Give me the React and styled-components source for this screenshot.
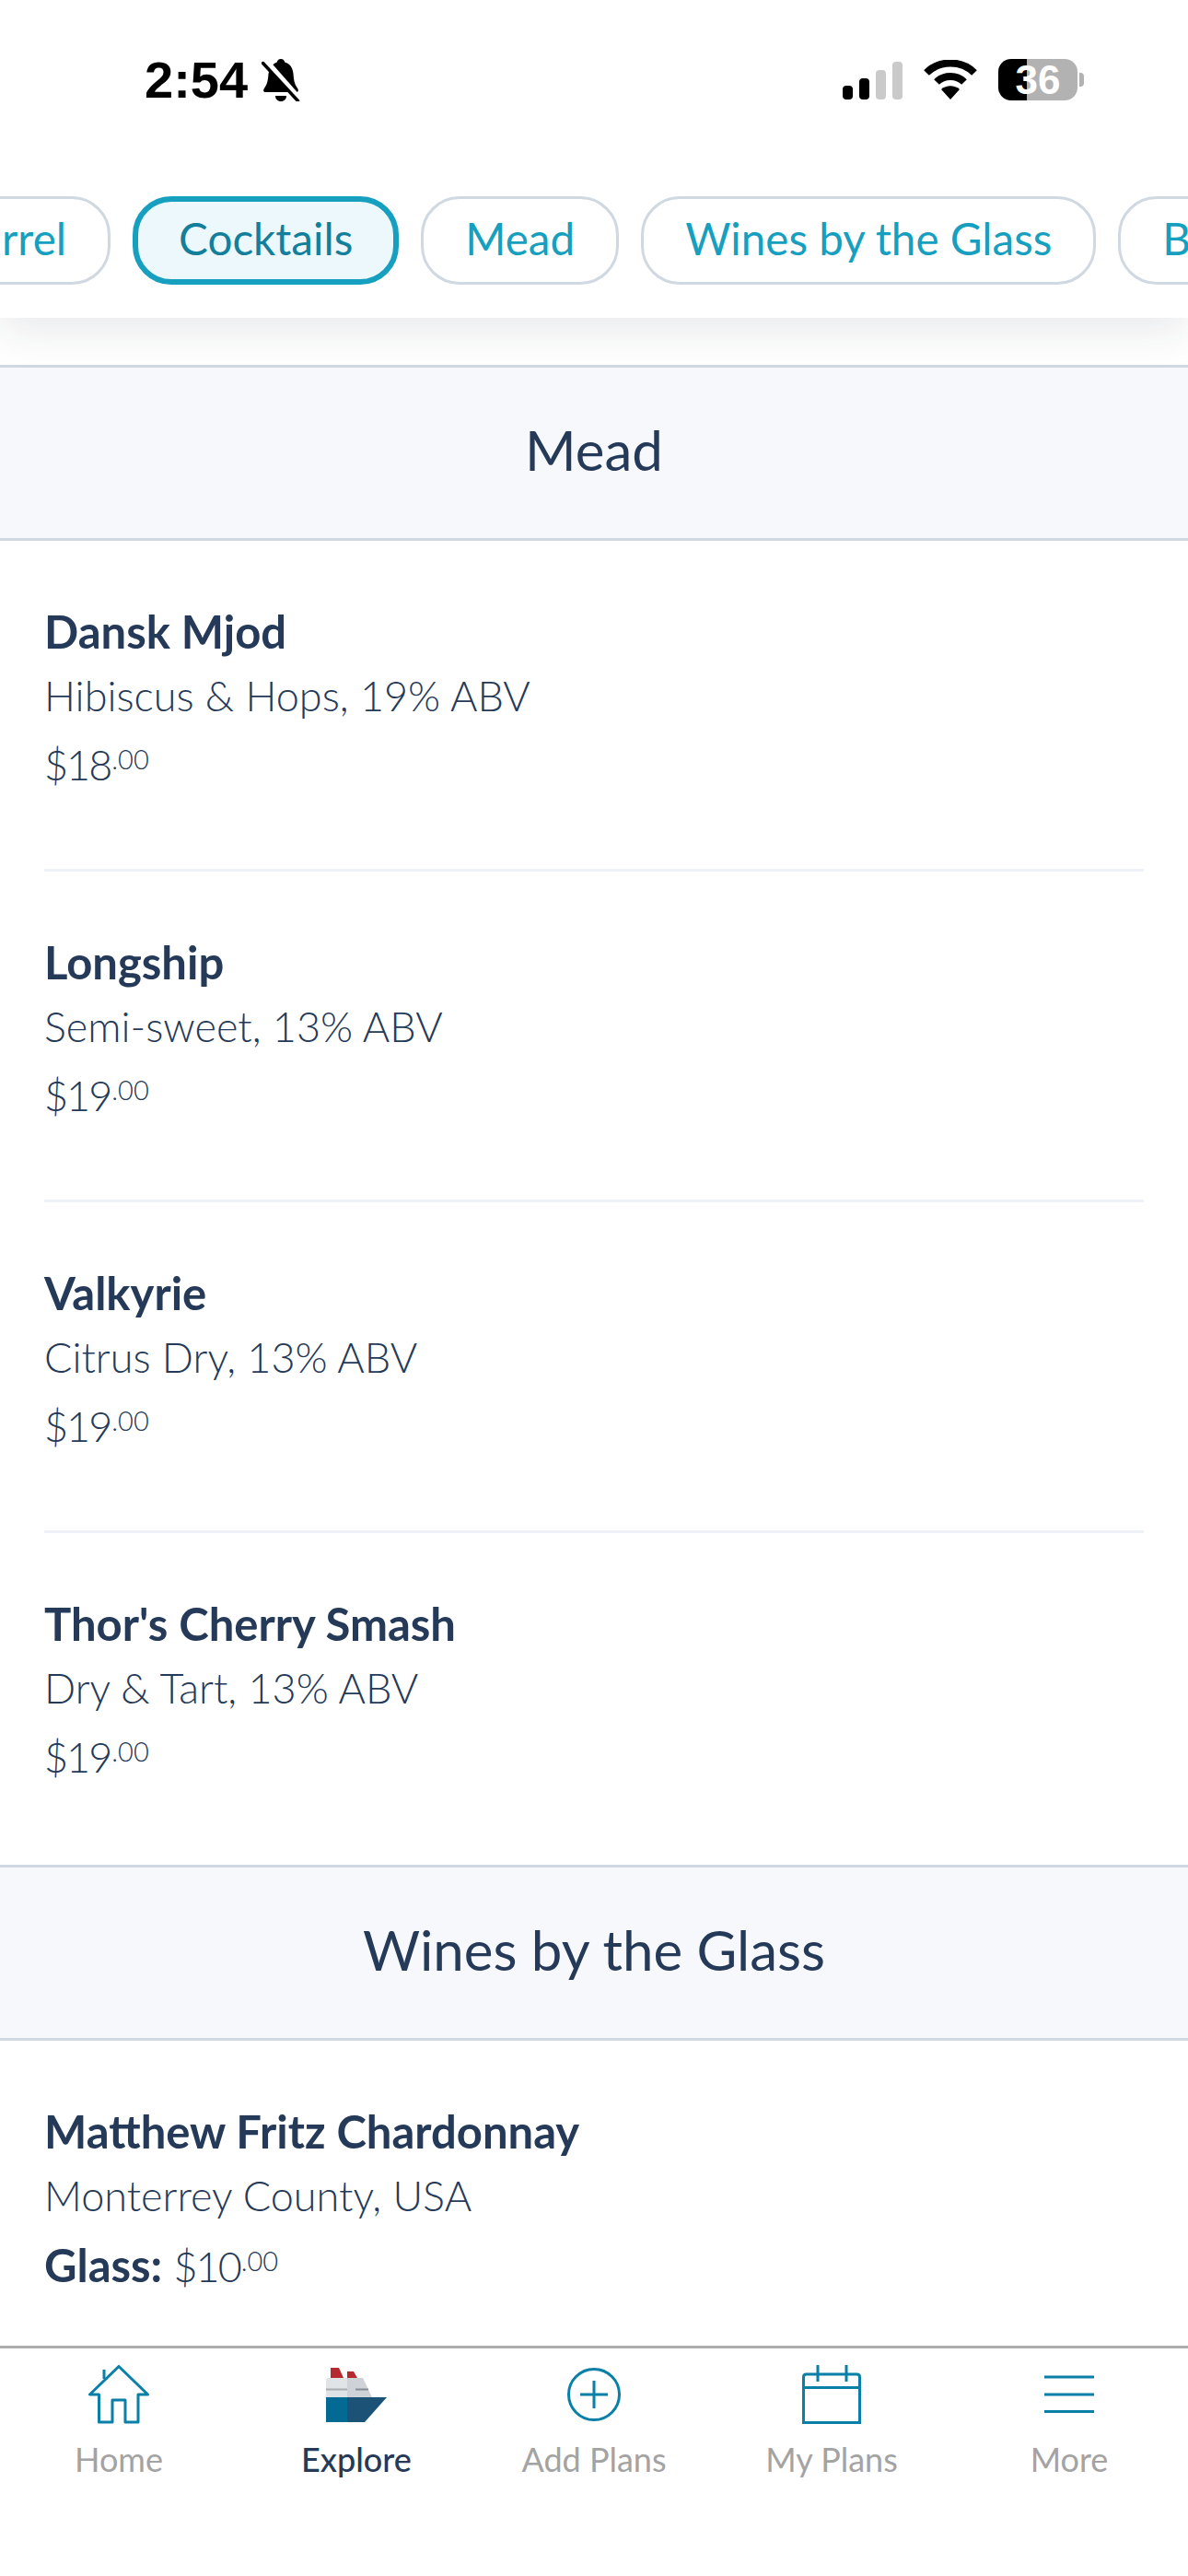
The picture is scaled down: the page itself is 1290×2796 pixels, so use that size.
import React from "react";
import styled, { createGlobalStyle } from "styled-components";

const Global = createGlobalStyle`
  html, body { margin: 0; padding: 0; background: #fff; }
  * { box-sizing: border-box; }
`;

const NAVY = "#253a58";
const TEAL = "#179fc0";
const ICON = "#0a7fa8";

const Phone = styled.div`
  width: 1290px; height: 2796px; display: flex; flex-direction: column;
  overflow: hidden; background: #fff; font-family: Lato, "Noto Sans", sans-serif; color: ${NAVY};
`;
const TopBar = styled.header`
  flex: none; height: 345px; background: #fff; position: relative; z-index: 2;
  box-shadow: 0 14px 44px rgba(25, 35, 55, 0.1);
  display: flex; flex-direction: column; overflow-x: clip;
`;
const StatusBar = styled.div`
  height: 213px; padding: 64px 113px 0 157px; display: flex; justify-content: space-between; align-items: flex-start;
`;
const StatusLeft = styled.div`display: flex; align-items: center; gap: 15px;`;
const Clock = styled.span`
  font: 700 56px/46px "Liberation Sans", Arial, sans-serif; color: #000; letter-spacing: 0;
`;
const StatusRight = styled.div`display: flex; align-items: flex-start; gap: 23px; padding-top: 1px;`;
const Signal = styled.div`display: flex; align-items: flex-end; gap: 7px; height: 43px;`;
const SignalBar = styled.i`
  display: block; width: 11px; height: ${p => p.$h}px; border-radius: 4px;
  background: ${p => (p.$on ? "#000" : "#cacaca")};
`;
const Battery = styled.div`display: flex; align-items: center; gap: 2px; margin-top: -1px;`;
const BatteryBody = styled.div`
  width: 86px; height: 45px; border-radius: 14px;
  background: linear-gradient(90deg, #000 0 31px, #b2b2b2 31px 100%);
  color: #fff; font: 700 44px/46px "Liberation Sans", Arial, sans-serif; text-align: center;
`;
const BatteryNub = styled.i`display: block; width: 5px; height: 15px; border-radius: 0 4px 4px 0; background: #b2b2b2;`;

const PillRow = styled.nav`
  display: flex; gap: 24px; margin-left: -100px; width: 1650px;
`;
const Pill = styled.div`
  flex: none; height: 96px; padding: 0 ${p => (p.$active ? 44 : 45)}px 5px; border-radius: 42px;
  display: flex; align-items: center; white-space: nowrap;
  font-size: 47.6px; letter-spacing: 0;
  color: ${p => (p.$active ? "#147f9b" : TEAL)};
  background: ${p => (p.$active ? "#ecf8fb" : "#fff")};
  border: ${p => (p.$active ? `6px solid ${TEAL}` : "3px solid #d0d8e1")};
`;

const Content = styled.main`flex: 1; min-height: 0; overflow: hidden; padding-top: 51px;`;
const SectionHeader = styled.h2`
  margin: 0; height: 191px; padding-bottom: 7px; display: flex; align-items: center; justify-content: center;
  background: #f6f8fc; border-top: 3px solid #d0d8e2; border-bottom: 3px solid #d0d8e2;
  font-size: 60px; font-weight: 400; color: ${NAVY};
`;
const Items = styled.div`padding: 0 48px;`;
const Item = styled.article`
  height: ${p => p.$h}px; padding-top: 63px;
  border-bottom: ${p => (p.$last ? "none" : "3px solid #eef1f5")};
`;
const Name = styled.div`font-size: 49px; font-weight: 700; line-height: 70px;`;
const Desc = styled.div`font-size: 45px; font-weight: 300; line-height: 70px;`;
const Price = styled.div`font-size: 45px; font-weight: 300; line-height: 80px;`;
const Amount = styled.span`letter-spacing: -2px;`;
const Cents = styled.sup`font-size: 29px; line-height: 0; vertical-align: 12px; margin-left: 1px;`;
const PriceLabel = styled.b`font-size: 49px; font-weight: 700;`;

const TabBar = styled.footer`
  flex: none; height: 250px; background: #fff; border-top: 3px solid #adadad;
  display: grid; grid-template-columns: repeat(5, 1fr); position: relative; z-index: 2;
`;
const Tab = styled.div`
  display: flex; flex-direction: column; align-items: center; padding-top: 17px;
`;
const TabIcon = styled.div`height: 66px; display: flex; align-items: center; justify-content: center;`;
const TabLabel = styled.span`
  margin-top: 15px; font-size: 36px; line-height: 44px;
  color: ${p => (p.$active ? NAVY : "#a3a3a3")};
  font-weight: ${p => (p.$active ? 500 : 400)};
`;

const Bell = () => (
  <svg width="42" height="46" viewBox="0 0 42 46">
    <path d="M21 0c2.500 0 4 1.600 4.200 3.600C31 5.200 34 10 34.500 16c.4 6 1 11 4 15 2 2.600 2 5-1 5H4.500c-3 0-3-2.400-1-5 3-4 3.600-9 4-15C9 10 12 5.200 16.800 3.600 17 1.600 18.500 0 21 0z" fill="#000" />
    <path d="M15 40h12c0 3.500-2.500 6-6 6s-6-2.500-6-6z" fill="#000" />
    <path d="M4 2l37 42" stroke="#fff" strokeWidth="7" />
    <path d="M1.500 4.500l38 41" stroke="#000" strokeWidth="3.500" strokeLinecap="round" />
  </svg>
);
const Wifi = () => (
  <svg width="58" height="43" viewBox="0 0 58 43">
    <path d="M29 43l-10-11c5.500-5 14.500-5 20 0z" fill="#000" />
    <path d="M14 24c8-8 22-8 30 0" fill="none" stroke="#000" strokeWidth="8" />
    <path d="M3 14c14-14 38-14 52 0" fill="none" stroke="#000" strokeWidth="8" />
  </svg>
);
const Home = () => (
  <svg width="66" height="64" viewBox="0 0 66 64" fill="none" stroke={ICON} strokeWidth="3" strokeLinejoin="round">
    <path d="M33 1.500L1.500 32h10v30H26V38h14v24h14V32h10.500z" />
    <path d="M17 5v10" />
  </svg>
);
const Ship = () => (
  <svg width="66" height="59" viewBox="0 0 66 59">
    <path d="M5 0h9l5 11H5z" fill="#b52a30" />
    <path d="M23 4h7l4 7H23z" fill="#b52a30" />
    <path d="M0 14c0-2 1-3 3-3h20v21H0z" fill="#e1e4e6" />
    <path d="M23 11h17l10 21H23z" fill="#cfd3d8" />
    <path d="M0 22.500h23v2H0z" fill="#a9adb0" />
    <path d="M32 22.500h14v2H32z" fill="#858d96" />
    <path d="M0 32h23v27H0z" fill="#026a93" />
    <path d="M23 32h43L42 59H23z" fill="#1b5275" />
  </svg>
);
const Plus = () => (
  <svg width="60" height="60" viewBox="0 0 60 60" fill="none" stroke={ICON} strokeWidth="3">
    <circle cx="30" cy="30" r="27.500" />
    <path d="M15 30h30M30 15v30" />
  </svg>
);
const Calendar = () => (
  <svg width="64" height="64" viewBox="0 0 64 64" fill="none" stroke={ICON} strokeWidth="3">
    <path d="M1.500 62.500V13q0-3 3-3h55q3 0 3 3v49.500z" />
    <path d="M1.500 24.500h61M17 0v18M48 0v18" />
  </svg>
);
const Menu = () => (
  <svg width="54" height="42" viewBox="0 0 54 42" fill="none" stroke={ICON} strokeWidth="3">
    <path d="M0 2h54M0 21h54M0 39.500h54" />
  </svg>
);

const mead = [
  ["Dansk Mjod", "Hibiscus & Hops, 19% ABV", "$18"],
  ["Longship", "Semi-sweet, 13% ABV", "$19"],
  ["Valkyrie", "Citrus Dry, 13% ABV", "$19"],
  ["Thor's Cherry Smash", "Dry & Tart, 13% ABV", "$19"],
];
const pills = ["Barrel", "Cocktails", "Mead", "Wines by the Glass", "Bottled Wines"];
const tabs = [
  ["Home", <Home />],
  ["Explore", <Ship />, true],
  ["Add Plans", <Plus />],
  ["My Plans", <Calendar />],
  ["More", <Menu />],
];

export default function App() {
  return (
    <Phone>
      <Global />
      <TopBar>
        <StatusBar>
          <StatusLeft>
            <Clock>2:54</Clock>
            <Bell />
          </StatusLeft>
          <StatusRight>
            <Signal>
              <SignalBar $h={15} $on />
              <SignalBar $h={23} $on />
              <SignalBar $h={32} />
              <SignalBar $h={41} />
            </Signal>
            <Wifi />
            <Battery>
              <BatteryBody>36</BatteryBody>
              <BatteryNub />
            </Battery>
          </StatusRight>
        </StatusBar>
        <PillRow>
          {pills.map(p => (
            <Pill key={p} $active={p === "Cocktails"}>{p}</Pill>
          ))}
        </PillRow>
      </TopBar>
      <Content>
        <SectionHeader>Mead</SectionHeader>
        <Items>
          {mead.map(([n, d, c], i) => (
            <Item key={n} $h={i === 3 ? 360 : 359} $last={i === 3}>
              <Name>{n}</Name>
              <Desc>{d}</Desc>
              <Price><Amount>{c}</Amount><Cents>.00</Cents></Price>
            </Item>
          ))}
        </Items>
        <SectionHeader>Wines by the Glass</SectionHeader>
        <Items>
          <Item $h={330} $last>
            <Name>Matthew Fritz Chardonnay</Name>
            <Desc>Monterrey County, USA</Desc>
            <Price><PriceLabel>Glass:</PriceLabel> <Amount>$10</Amount><Cents>.00</Cents></Price>
          </Item>
        </Items>
      </Content>
      <TabBar>
        {tabs.map(([label, icon, active]) => (
          <Tab key={label}>
            <TabIcon>{icon}</TabIcon>
            <TabLabel $active={active}>{label}</TabLabel>
          </Tab>
        ))}
      </TabBar>
    </Phone>
  );
}
